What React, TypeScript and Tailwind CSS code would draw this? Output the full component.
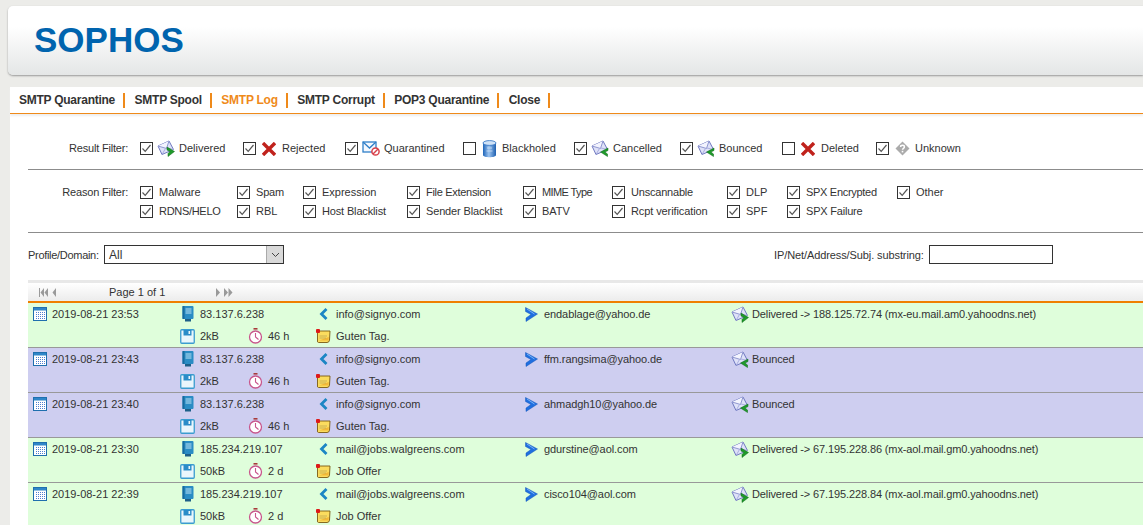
import { ReactNode } from 'react'

function Envelope({ dir }: { dir: 'right' | 'left' }) {
  return (
    <svg width="18" height="17" viewBox="0 0 18 17">
      <path d="M1 6 L12 1 L16.5 9.5 L5 14.5 Z" fill="#dfe2f8" stroke="#6f78c0" strokeWidth="1" />
      <path d="M1 6 L9.5 8.5 L12 1" fill="#f3f4fe" stroke="#8f96d0" strokeWidth="1" />
      <path d="M5 14.5 L8.5 8.5 M16.5 9.5 L10 8" fill="none" stroke="#a9aee0" strokeWidth="1" />
      {dir === 'right' ? (
        <path d="M10 7 L17.5 11.5 L11 16.5 L11 13.5 L13 11.5 L10 10 Z" fill="#1f9a2a" stroke="#0e6a18" strokeWidth=".5" />
      ) : (
        <path d="M17 8 L9.5 12 L16.5 16.5 L16.5 14 L14 12 L17 10.5 Z" fill="#1f9a2a" stroke="#0e6a18" strokeWidth=".5" />
      )}
    </svg>
  )
}

function RedX() {
  return (
    <svg width="14" height="14" viewBox="0 0 14 14">
      <path d="M2.2 2.2 L11.8 11.8 M11.8 2.2 L2.2 11.8" stroke="#c0221c" strokeWidth="3.4" strokeLinecap="square" />
    </svg>
  )
}

function Quarantine() {
  return (
    <svg width="19" height="17" viewBox="0 0 19 17">
      <rect x="1" y="2" width="13" height="10" fill="#f4f8fe" stroke="#2f7fc8" strokeWidth="1.3" />
      <path d="M1 2 L7.5 8 L14 2" fill="none" stroke="#2f7fc8" strokeWidth="1.3" />
      <circle cx="13.5" cy="11.5" r="3.6" fill="#fff" stroke="#d8404a" strokeWidth="1.5" />
      <path d="M11 14 L16 9" stroke="#d8404a" strokeWidth="1.5" />
    </svg>
  )
}

function Blackhole() {
  return (
    <svg width="15" height="18" viewBox="0 0 15 18">
      <defs>
        <linearGradient id="bh" x1="0" x2="1" y1="0" y2="0">
          <stop offset="0" stopColor="#1c63b8" />
          <stop offset=".45" stopColor="#9cc4f0" />
          <stop offset="1" stopColor="#1d5fb0" />
        </linearGradient>
      </defs>
      <path d="M1 3 L1 15 C1 18 14 18 14 15 L14 3 Z" fill="url(#bh)" />
      <ellipse cx="7.5" cy="3" rx="6.5" ry="2.4" fill="#cfe2f7" stroke="#2b6fc0" strokeWidth=".8" />
      <path d="M5 8 L10 8 M4.5 11 L10.5 11" stroke="#cfe2f7" strokeWidth=".8" />
    </svg>
  )
}

function Unknown() {
  return (
    <svg width="15" height="15" viewBox="0 0 15 15">
      <path d="M7.5 0.5 L14.5 7.5 L7.5 14.5 L0.5 7.5 Z" fill="#ababab" />
      <path d="M5.6 6 C5.6 3.8 9.4 3.8 9.4 6 C9.4 7.4 7.5 7.2 7.5 8.8" fill="none" stroke="#fff" strokeWidth="1.5" />
      <rect x="6.7" y="9.8" width="1.6" height="1.6" fill="#fff" />
    </svg>
  )
}

function Calendar() {
  return (
    <svg width="14" height="14" viewBox="0 0 14 14">
      <rect x=".5" y=".5" width="13" height="13" fill="#fff" stroke="#1f6fae" />
      <rect x="1" y="1" width="12" height="2.5" fill="#2f86c8" />
      {[5, 7, 9, 11].map((y) =>
        [3, 5, 7, 9, 11].map((x) => <rect key={`${x}-${y}`} x={x} y={y} width="1" height="1" fill="#4f7fd0" />)
      )}
    </svg>
  )
}

function Server() {
  return (
    <svg width="12" height="16" viewBox="0 0 12 16">
      <rect x="0.5" y="0" width="11" height="13" rx="1" fill="#2a8cc4" />
      <rect x="0.5" y="0" width="2" height="13" fill="#176a9e" />
      <path d="M3.5 3 H9.5 M3.5 5 H9.5 M3.5 7 H9.5" stroke="#bfe3f5" strokeWidth="1" />
      <rect x="3" y="13" width="6" height="2.5" fill="#1d5f88" />
    </svg>
  )
}

function Floppy() {
  return (
    <svg width="15" height="15" viewBox="0 0 15 15">
      <rect x=".75" y=".75" width="13.5" height="13.5" rx="1" fill="#eaf6fc" stroke="#3b9ccf" strokeWidth="1.3" />
      <rect x="3.5" y="1" width="8" height="5.5" fill="#2a8cc8" />
      <rect x="8.5" y="2" width="1.6" height="3" fill="#eaf6fc" />
    </svg>
  )
}

function Clock() {
  return (
    <svg width="15" height="16" viewBox="0 0 15 16">
      <rect x="5.5" y="0" width="4" height="1.6" fill="#a83a3a" />
      <circle cx="7.5" cy="9" r="6" fill="#fff" stroke="#c8568c" strokeWidth="1.3" />
      <path d="M7.5 5 V9 L10.5 11.5" fill="none" stroke="#c8568c" strokeWidth="1.1" />
    </svg>
  )
}

function FromArrow() {
  return (
    <svg width="9" height="12" viewBox="0 0 9 12">
      <path d="M7.5 1 L2.5 6 L7.5 11" fill="none" stroke="#1c86c4" strokeWidth="2.8" />
    </svg>
  )
}

function ToArrow() {
  return (
    <svg width="13" height="15" viewBox="0 0 13 15">
      <path d="M0.5 0.5 L12.5 7 L1 14.5 L1 11 L6 7.5 L0.5 4.5 Z" fill="#1f6fe0" stroke="#1557b8" strokeWidth=".5" />
      <path d="M2 2 L9.5 7" stroke="#7db4f5" strokeWidth="1" />
    </svg>
  )
}

function Note() {
  return (
    <svg width="15" height="15" viewBox="0 0 15 15">
      <path d="M1.5 2 H14 L13.5 11 Q13.3 13.5 11 13.5 H2.5 Q1 13.5 1.5 11 Z" fill="#fbdc5e" stroke="#7a5a12" strokeWidth=".9" />
      <path d="M3 11.5 H12.5 L12.8 8 Z" fill="#f2b838" />
      <path d="M3.5 7 H11 M3.5 9 H10" stroke="#b8a050" strokeWidth=".7" />
      <rect x="0" y="0" width="4" height="4" rx="1" fill="#dd1a1a" />
    </svg>
  )
}

function Checkbox({ checked = true }: { checked?: boolean }) {
  return (
    <span className="flex h-[13px] w-[13px] flex-none items-center justify-center border border-[#333] bg-white">
      {checked && (
        <svg width="11" height="11" viewBox="0 0 11 11">
          <path d="M1.5 5.5 L4.2 8.3 L9.5 2" fill="none" stroke="#555" strokeWidth="1.2" />
        </svg>
      )}
    </span>
  )
}

function PagerArrows({ dir }: { dir: 'left' | 'right' }) {
  return (
    <svg width="18" height="9" viewBox="0 0 18 9">
      {dir === 'left' ? (
        <path d="M0 0 H1 V9 H0 Z M5 0 V9 L1.5 4.5 Z M9 0 V9 L5.5 4.5 Z M17 0 V9 L13.5 4.5 Z" fill="#9a9a9a" />
      ) : (
        <path d="M0 0 V9 L4 4.5 Z M8 0 V9 L12 4.5 Z M12.5 0 V9 L16.5 4.5 Z" fill="#9a9a9a" />
      )}
    </svg>
  )
}

const tabs = ['SMTP Quarantine', 'SMTP Spool', 'SMTP Log', 'SMTP Corrupt', 'POP3 Quarantine', 'Close']

const results: { label: string; checked: boolean; icon: ReactNode; width: string }[] = [
  { label: 'Delivered', checked: true, icon: <Envelope dir="right" />, width: 'w-[103px]' },
  { label: 'Rejected', checked: true, icon: <RedX />, width: 'w-[102px]' },
  { label: 'Quarantined', checked: true, icon: <Quarantine />, width: 'w-[118px]' },
  { label: 'Blackholed', checked: false, icon: <Blackhole />, width: 'w-[111px]' },
  { label: 'Cancelled', checked: true, icon: <Envelope dir="left" />, width: 'w-[106px]' },
  { label: 'Bounced', checked: true, icon: <Envelope dir="left" />, width: 'w-[102px]' },
  { label: 'Deleted', checked: false, icon: <RedX />, width: 'w-[94px]' },
  { label: 'Unknown', checked: true, icon: <Unknown />, width: 'w-[100px]' },
]

const reasons: { label: string; cls?: string }[] = [
  { label: 'Malware' },
  { label: 'Spam', cls: 'tracking-[-0.2px]' },
  { label: 'Expression' },
  { label: 'File Extension', cls: 'tracking-[-0.3px]' },
  { label: 'MIME Type', cls: 'tracking-[-0.6px]' },
  { label: 'Unscannable', cls: 'tracking-[-0.2px]' },
  { label: 'DLP' },
  { label: 'SPX Encrypted', cls: 'tracking-[-0.3px]' },
  { label: 'Other' },
  { label: 'RDNS/HELO', cls: 'tracking-[-0.3px]' },
  { label: 'RBL' },
  { label: 'Host Blacklist', cls: 'tracking-[-0.15px]' },
  { label: 'Sender Blacklist', cls: 'tracking-[-0.15px]' },
  { label: 'BATV' },
  { label: 'Rcpt verification', cls: 'tracking-[-0.1px]' },
  { label: 'SPF' },
  { label: 'SPX Failure', cls: 'tracking-[-0.2px]' },
]

const rows = [
  { date: '2019-08-21 23:53', ip: '83.137.6.238', size: '2kB', age: '46 h', from: 'info@signyo.com', to: 'endablage@yahoo.de', subject: 'Guten Tag.', status: 'Delivered -> 188.125.72.74 (mx-eu.mail.am0.yahoodns.net)', ok: true },
  { date: '2019-08-21 23:43', ip: '83.137.6.238', size: '2kB', age: '46 h', from: 'info@signyo.com', to: 'ffm.rangsima@yahoo.de', subject: 'Guten Tag.', status: 'Bounced', ok: false },
  { date: '2019-08-21 23:40', ip: '83.137.6.238', size: '2kB', age: '46 h', from: 'info@signyo.com', to: 'ahmadgh10@yahoo.de', subject: 'Guten Tag.', status: 'Bounced', ok: false },
  { date: '2019-08-21 23:30', ip: '185.234.219.107', size: '50kB', age: '2 d', from: 'mail@jobs.walgreens.com', to: 'gdurstine@aol.com', subject: 'Job Offer', status: 'Delivered -> 67.195.228.86 (mx-aol.mail.gm0.yahoodns.net)', ok: true },
  { date: '2019-08-21 22:39', ip: '185.234.219.107', size: '50kB', age: '2 d', from: 'mail@jobs.walgreens.com', to: 'cisco104@aol.com', subject: 'Job Offer', status: 'Delivered -> 67.195.228.84 (mx-aol.mail.gm0.yahoodns.net)', ok: true },
]

function IconBox({ w, children }: { w: string; children: ReactNode }) {
  return <span className={`flex flex-none items-center ${w}`}>{children}</span>
}

export default function App() {
  return (
    <div className="flex h-[525px] w-[1143px] flex-col overflow-hidden bg-[#ecece9] font-['Liberation_Sans',Arial,sans-serif] text-[11px] text-[#333]">
      <header className="mt-[6px] ml-[8px] flex h-[69px] flex-none items-center rounded-l-[5px] bg-gradient-to-b from-white from-30% to-[#e4e6e6] pb-[2px] pl-[26px] shadow-[0_1px_2px_#999]">
        <span className="text-[35px] leading-none font-bold text-[#0064ae]">SOPHOS</span>
      </header>

      <main className="mt-[12px] ml-[10px] flex-1 bg-white">
        <nav className="flex h-[27px] items-center gap-[9.5px] border-b border-[#ef8a1a] pl-[9px] text-[12px] font-bold tracking-[-0.25px] shadow-[0_2px_2px_#eee]">
          {tabs.map((t) => (
            <span
              key={t}
              className={`border-r-2 border-[#ef8a1a] pr-[8px] leading-[15px] ${t === 'SMTP Log' ? 'text-[#ef8a1a]' : 'text-[#333]'}`}
            >
              {t}
            </span>
          ))}
        </nav>

        <div className="pl-[18px]">
          <section className="flex h-[56px] items-center border-b border-[#8c8c8c] pt-[14px]">
            <span className="w-[100px] flex-none text-right tracking-[-0.2px]">Result Filter:</span>
            <div className="ml-[12px] flex">
              {results.map((r) => (
                <label key={r.label} className={`flex items-center ${r.width}`}>
                  <Checkbox checked={r.checked} />
                  <IconBox w="w-[26px] justify-center">{r.icon}</IconBox>
                  <span>{r.label}</span>
                </label>
              ))}
            </div>
          </section>

          <section className="flex border-b border-[#8c8c8c] pt-[13px] pb-[11px]">
            <span className="w-[100px] flex-none pt-[2px] text-right leading-[15px] tracking-[-0.2px]">Reason Filter:</span>
            <div className="ml-[12px] grid grid-cols-[97px_66px_104px_116px_89px_115px_60px_110px_auto] auto-rows-[19px]">
              {reasons.map((r) => (
                <label key={r.label} className="flex items-center gap-[6px]">
                  <Checkbox />
                  <span className={r.cls}>{r.label}</span>
                </label>
              ))}
            </div>
          </section>

          <section className="flex h-[47px] items-start pt-[12px]">
            <span className="w-[76px] flex-none leading-[20px] tracking-[-0.3px]">Profile/Domain:</span>
            <div className="flex h-[19px] w-[180px] items-center justify-between border border-[#333] bg-white pl-[4px] text-[12px]">
              <span>All</span>
              <span className="flex h-[17px] w-[17px] items-center justify-center border-l border-[#aaa] bg-[#d9d9d9]">
                <svg width="9" height="6" viewBox="0 0 9 6">
                  <path d="M1 1 L4.5 4.5 L8 1" fill="none" stroke="#444" strokeWidth="1" />
                </svg>
              </span>
            </div>
            <span className="ml-[490px] w-[150px] flex-none leading-[20px] tracking-[-0.1px] whitespace-nowrap">IP/Net/Address/Subj. substring:</span>
            <div className="ml-[5px] h-[19px] w-[124px] flex-none border border-[#333] bg-white" />
          </section>

          <div className="flex h-[21px] items-center border-t-[3px] border-[#e8e8e8] bg-gradient-to-b from-white to-[#ececec] pl-[11px]">
            <PagerArrows dir="left" />
            <span className="ml-[52px]">Page 1 of 1</span>
            <span className="ml-[51px]">
              <PagerArrows dir="right" />
            </span>
          </div>

          <div className="h-[2px] bg-[#ef7f00]" />

          {rows.map((r) => (
            <div
              key={r.date}
              className={`grid h-[45px] grid-cols-[147px_136px_208px_207px_1fr] grid-rows-[22px_22px] border-b border-[#999] pl-[5px] ${r.ok ? 'bg-[#dffedb]' : 'bg-[#cecef0]'}`}
            >
              <div className="flex items-center">
                <IconBox w="w-[19px]"><Calendar /></IconBox>
                {r.date}
              </div>
              <div className="flex items-center">
                <IconBox w="w-[20px] pl-[2px]"><Server /></IconBox>
                {r.ip}
              </div>
              <div className="flex items-center">
                <IconBox w="w-[20px] pl-[3px]"><FromArrow /></IconBox>
                {r.from}
              </div>
              <div className="flex items-center tracking-[-0.08px]">
                <IconBox w="w-[20px] pl-[1px]"><ToArrow /></IconBox>
                {r.to}
              </div>
              <div className="flex items-center tracking-[-0.12px]">
                <IconBox w="w-[21px]"><Envelope dir={r.ok ? 'right' : 'left'} /></IconBox>
                {r.status}
              </div>
              <div />
              <div className="flex items-center">
                <IconBox w="w-[20px]"><Floppy /></IconBox>
                <span className="w-[48px]">{r.size}</span>
                <IconBox w="w-[20px]"><Clock /></IconBox>
                {r.age}
              </div>
              <div className="col-span-3 flex items-center">
                <IconBox w="w-[20px]"><Note /></IconBox>
                {r.subject}
              </div>
            </div>
          ))}
        </div>
      </main>
    </div>
  )
}
